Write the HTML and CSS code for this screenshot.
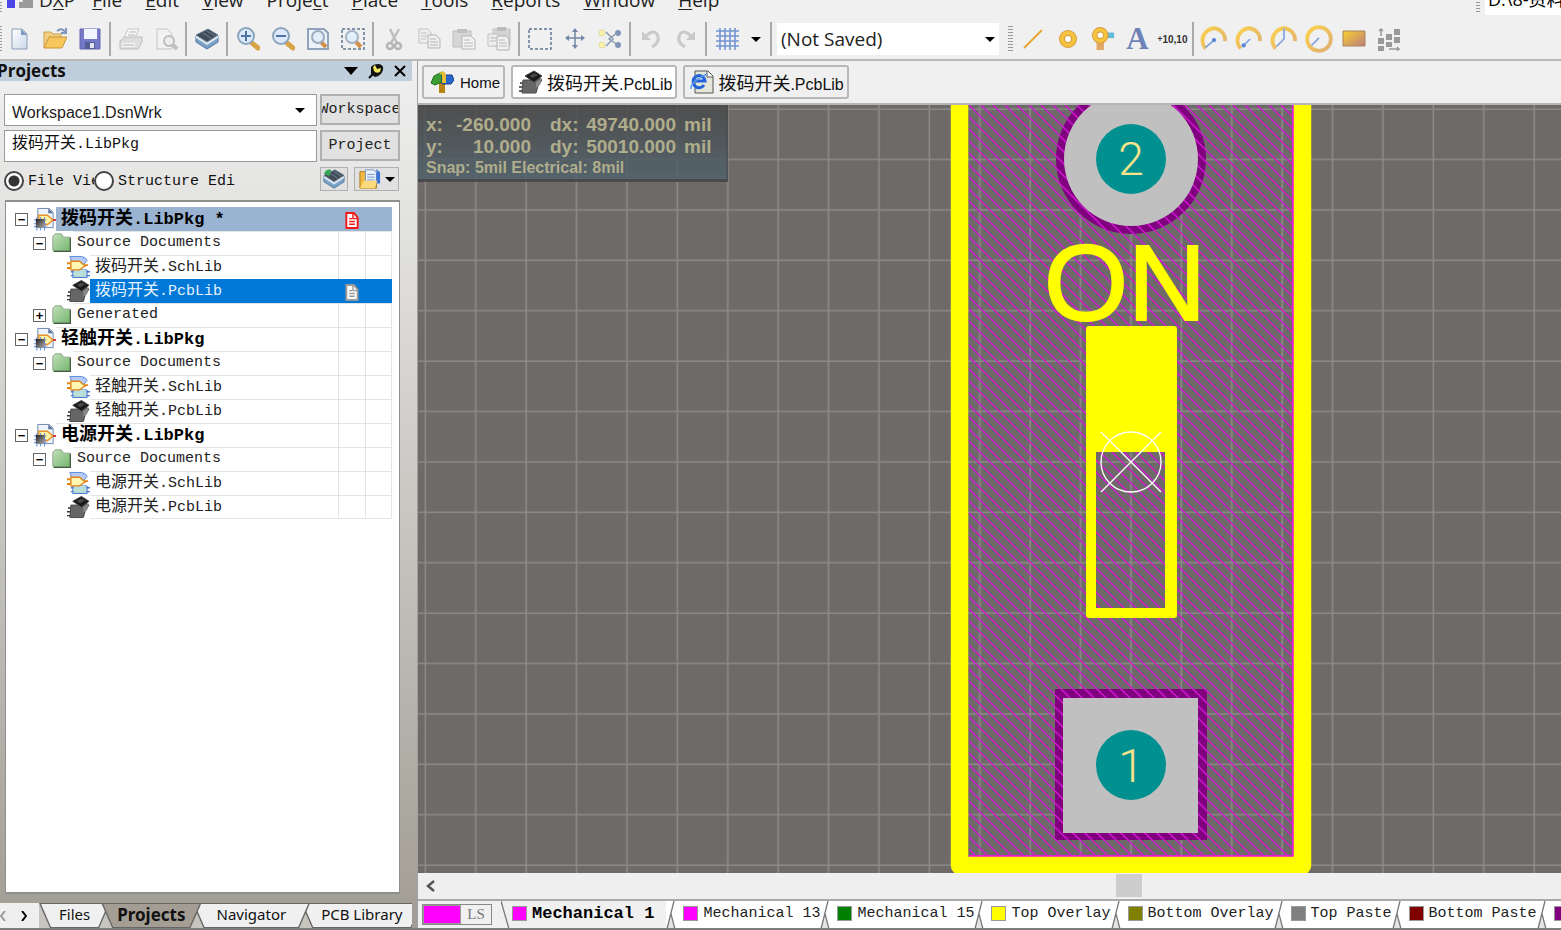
FILE: index.html
```html
<!DOCTYPE html>
<html lang="zh-CN">
<head>
    <meta charset="UTF-8">
    <meta name="viewport" content="width=device-width, initial-scale=1.0">
    <title>拨码开关.PcbLib</title>
    <link rel="stylesheet" href="styles.css">
</head>
<body>
    <!-- 图标 -->
    <svg class="defs" width="0" height="0" aria-hidden="true">
        <defs>
            <linearGradient id="g-paper" x1="0" y1="0" x2="1" y2="1"><stop offset="0" stop-color="#fff"/><stop offset="1" stop-color="#c8d8ea"/></linearGradient>
            <linearGradient id="g-gold" x1="0" y1="0" x2="1" y2="1"><stop offset="0" stop-color="#fbd14b"/><stop offset="1" stop-color="#dfae78"/></linearGradient>
            <linearGradient id="g-rect" x1="0" y1="0" x2="1" y2="1"><stop offset="0" stop-color="#fccf2c"/><stop offset="1" stop-color="#b98080"/></linearGradient>
            <linearGradient id="g-green" x1="0" y1="0" x2="1" y2="1"><stop offset="0" stop-color="#c4e0bd"/><stop offset="1" stop-color="#74b56d"/></linearGradient>
            <linearGradient id="g-chip" x1="0" y1="0" x2="1" y2="1"><stop offset="0" stop-color="#222"/><stop offset="1" stop-color="#aaa"/></linearGradient>
        </defs>
        <symbol id="i-new" viewBox="0 0 24 24"><path d="M4 2h10l5 5v15H4z" fill="url(#g-paper)" stroke="#8a9cb3"/><path d="M13 2l6 6h-6z" fill="#7a98c0"/></symbol>
        <symbol id="i-open" viewBox="0 0 24 24"><path d="M1 21V5h7l2 2h8v4" fill="#f2cf82" stroke="#c9a04f"/><path d="M1 21l5-11h18l-5 11z" fill="#f7c75c" stroke="#c9953b"/><path d="M14 4q5-4 8 1m1-4v5h-5" fill="none" stroke="#7d97bb" stroke-width="2"/></symbol>
        <symbol id="i-save" viewBox="0 0 24 24"><path d="M2 2h20v20H2z" fill="#7678c8" stroke="#6567b0"/><path d="M6 2h13v10H6z" fill="#f2f5ff"/><path d="M7 15h10v7H7z" fill="#555f91"/><path d="M12 16h4v5h-4z" fill="#e0e4f5"/></symbol>
        <symbol id="i-print" viewBox="0 0 24 24"><path d="M9 2h11l-4 9H5z" fill="#f8f8f8" stroke="#c4c4c4"/><path d="M1 14l5-4h17v5l-4 7H1z" fill="#dedede" stroke="#bcbcbc"/><path d="M3 16h13v4H3z" fill="#f4f4f4"/><path d="M4 18h11M10 5h7M9 8h7" stroke="#b5b5b5"/></symbol>
        <symbol id="i-preview" viewBox="0 0 24 24"><path d="M3 2h10l5 5v15H3z" fill="#f2f2f2" stroke="#c4c4c4"/><circle cx="15" cy="14" r="5" fill="#eee" stroke="#bdbdbd" stroke-width="2"/><path d="M19 18l4 4" stroke="#c0c0c0" stroke-width="4"/></symbol>
        <symbol id="i-layers" viewBox="0 0 24 24"><path d="M1 9v6l11 7 11-7V9z" fill="#7aa2c9" stroke="#54789b"/><path d="M1 9v2l11 7 11-7V9z" fill="#dce7f0"/><path d="M1 8l12-6 10 6-11 7z" fill="#414c58" stroke="#6e8090"/><path d="M8 6l8 5m-4-7l8 5" stroke="#718294"/></symbol>
        <symbol id="i-zoomin" viewBox="0 0 24 24"><path d="M16 16l6 5" stroke="#d6a446" stroke-width="5" stroke-linecap="round"/><circle cx="10" cy="9" r="8" fill="#dce9fa" stroke="#8ba4bd" stroke-width="2"/><path d="M5 9h10M10 4v10" stroke="#4e72a4" stroke-width="2"/></symbol>
        <symbol id="i-zoomout" viewBox="0 0 24 24"><path d="M16 16l6 5" stroke="#d6a446" stroke-width="5" stroke-linecap="round"/><circle cx="10" cy="9" r="8" fill="#dce9fa" stroke="#8ba4bd" stroke-width="2"/><path d="M5 9h10" stroke="#4e72a4" stroke-width="2"/></symbol>
        <symbol id="i-zoomdoc" viewBox="0 0 24 24"><path d="M2 2h16l4 4v16H2z" fill="#edf2f8" stroke="#8fa4bc" stroke-width="2"/><path d="M15 15l5 5" stroke="#d18f4c" stroke-width="4"/><circle cx="12" cy="10" r="6" fill="#e3eefb" stroke="#9bacc0" stroke-width="2"/></symbol>
        <symbol id="i-zoomarea" viewBox="0 0 24 24"><path d="M1 2h22v20H1z" fill="none" stroke="#5c7491" stroke-width="1.5" stroke-dasharray="3 2"/><path d="M15 15l5 5" stroke="#d18f4c" stroke-width="4"/><circle cx="11" cy="10" r="6" fill="#e3eefb" stroke="#a4b3c4" stroke-width="2"/></symbol>
        <symbol id="i-cut" viewBox="0 0 24 24"><path d="M8 2l7 14M17 2L9 16" stroke="#bdbdbd" stroke-width="2.5"/><circle cx="8" cy="19" r="3" fill="none" stroke="#b5b5b5" stroke-width="2.5"/><circle cx="16" cy="19" r="3" fill="none" stroke="#b5b5b5" stroke-width="2.5"/></symbol>
        <symbol id="i-copy" viewBox="0 0 24 24"><path d="M2 2h9l3 3v11H2z" fill="#eee" stroke="#c4c4c4"/><path d="M4 6h6M4 9h6M4 12h5" stroke="#c2c2c2"/><path d="M11 8h8l4 4v9H11z" fill="#eee" stroke="#b5b5b5"/><path d="M13 12h6M13 15h8M13 18h8" stroke="#b8b8b8"/></symbol>
        <symbol id="i-paste" viewBox="0 0 24 24"><path d="M1 4h18v16H1z" fill="#d6d6d6" stroke="#c0c0c0"/><path d="M5 2h10v4H5z" fill="#c0c0c0"/><path d="M10 9h9l4 4v9H10z" fill="#f2f2f2" stroke="#b5b5b5"/><path d="M12 13h6M12 16h9M12 19h9" stroke="#b8b8b8"/></symbol>
        <symbol id="i-pastes" viewBox="0 0 24 24"><path d="M6 2h17v17H6z" fill="#d4d4d4" stroke="#c0c0c0"/><path d="M10 0h9v4h-9z" fill="#bbb"/><path d="M1 7h10v12H1z" fill="#eee" stroke="#c0c0c0"/><path d="M10 9h9l3 3v11H10z" fill="#f0f0f0" stroke="#b0b0b0"/><path d="M3 11h6M3 14h6M12 13h6M12 16h8M12 19h8" stroke="#b8b8b8"/></symbol>
        <symbol id="i-select" viewBox="0 0 24 24"><path d="M1 2h22v20H1z" fill="none" stroke="#5c7491" stroke-width="1.5" stroke-dasharray="3 2"/></symbol>
        <symbol id="i-move" viewBox="0 0 24 24"><path d="M12 3v17M3 11h18" stroke="#7289a5" stroke-width="1.5"/><path d="M12 1l3 4H9zM12 22l3-4H9zM2 11l4-3v6zM22 11l-4-3v6z" fill="#7289a5"/></symbol>
        <symbol id="i-cross" viewBox="0 0 24 24"><circle cx="4" cy="6" r="3" fill="#fbf3a9" stroke="#e5dc98"/><circle cx="4" cy="18" r="3" fill="#fbf3a9" stroke="#e5dc98"/><circle cx="20" cy="6" r="3" fill="#8094b8"/><circle cx="20" cy="18" r="3" fill="#8094b8"/><path d="M8 5l7 7-7 7M19 6l-8 6 9 6" fill="none" stroke="#8b9bb2" stroke-width="1.5"/></symbol>
        <symbol id="i-undo" viewBox="0 0 24 24"><path d="M6 10q7-8 12-3 4 8-5 13" fill="none" stroke="#cacaca" stroke-width="3"/><path d="M3 4v9h9z" fill="#cacaca"/></symbol>
        <symbol id="i-redo" viewBox="0 0 24 24"><path d="M18 10q-7-8-12-3-4 8 5 13" fill="none" stroke="#cacaca" stroke-width="3"/><path d="M21 4v9h-9z" fill="#cacaca"/></symbol>
        <symbol id="i-grid" viewBox="0 0 24 24"><path d="M5 1v22M10 1v22M15 1v22M20 1v22M1 4h23M1 9h23M1 14h23M1 19h23" stroke="#7395d1" stroke-width="1.6"/></symbol>
        <symbol id="i-line" viewBox="0 0 24 24"><path d="M3 21L21 3" stroke="#e6a636" stroke-width="2"/></symbol>
        <symbol id="i-pad" viewBox="0 0 24 24"><circle cx="12" cy="12" r="6" fill="#fff" stroke="#d89a3c" stroke-width="6"/><circle cx="12" cy="12" r="6" fill="none" stroke="#f6c340" stroke-width="4"/></symbol>
        <symbol id="i-via" viewBox="0 0 26 26"><path d="M14 6h11v6H14z" fill="#63b9d8"/><path d="M6 14h8v11H6z" fill="#e1a768"/><circle cx="10" cy="9" r="6" fill="#fff" stroke="#d89a3c" stroke-width="6"/><circle cx="10" cy="9" r="6" fill="none" stroke="#f6c340" stroke-width="4"/></symbol>
        <symbol id="i-arc" viewBox="0 0 26 26"><path d="M5 22Q-1 13 6 6q7-6 14 0 4 4 3 9" fill="none" stroke="url(#g-gold)" stroke-width="3.5"/></symbol>
        <symbol id="i-array" viewBox="0 0 24 24"><path d="M9 7h6v6H9zM1 11h6v6H1zM1 19h6v5H1zM9 15h6v5H9zM17 2h6v6h-6zM17 10h6v6h-6z" fill="#999"/><path d="M4 9V2M2 4l2-2 2 2M12 22h10m-2-2l2 2-2 2" fill="none" stroke="#999" stroke-width="1.5"/></symbol>
        <symbol id="i-home" viewBox="0 0 24 24"><path d="M9 8h6v15H9z" fill="#b98312"/><path d="M1 13l3-7 8-4v10l-7 3z" fill="#3a9e33" stroke="#1d6b21"/><path d="M12 5h10l2 5-3 4h-9z" fill="#2a65ca" stroke="#143f8c"/><path d="M9 3l4-2 3 3v9h-4V5z" fill="#e7bd34"/></symbol>
        <symbol id="i-pcb" viewBox="0 0 24 24"><path d="M1 13h7M0 17h6M0 21h5M14 17h5M12 21h6" stroke="#333" stroke-width="1.5"/><path d="M4 10h10l6-2 3 2-4 6-2 7H3z" fill="#666" stroke="#4a4a4a"/><path d="M17 12l6-4-2 7-4 3z" fill="#888"/><path d="M6 6l9-5 8 5-8 6z" fill="#181818" stroke="#444"/><path d="M10 6l5-3 4 2-5 3z" fill="#484848"/></symbol>
        <symbol id="i-web" viewBox="0 0 24 24"><path d="M5 1h13l5 5v17H5z" fill="#e5e5da" stroke="#555"/><path d="M17 1v6h6" fill="#fff" stroke="#555"/><path d="M14 15a6 6 0 1 1 1-4H5" fill="none" stroke="#2364d8" stroke-width="3"/><path d="M1 19Q0 12 17 4" fill="none" stroke="#5a9af0" stroke-width="1.5"/></symbol>
        <symbol id="i-pkg" viewBox="0 0 24 24"><path d="M5 1h12l4 4v16H5z" fill="#eef4fc" stroke="#6c87aa"/><path d="M16 1v5h5" fill="#536f94"/><path d="M6 8h9l6 5-6 5H6z" fill="#fff2a1" stroke="#e7912d" stroke-width="1.5"/><path d="M21 13h3" stroke="#c33" stroke-width="2"/><path d="M1 13h13M1 17h13M1 20h13M4 10v14M8 10v14M12 10v14" stroke="#5684dd"/><path d="M3 12h9v9H3z" fill="url(#g-chip)"/></symbol>
        <symbol id="i-folder" viewBox="0 0 24 24"><path d="M1 21V4l3-3h7l3 4h8v16z" fill="url(#g-green)" stroke="#7a9c76"/><path d="M22 6v16H2" fill="none" stroke="#3f5b3e" stroke-width="1.5"/></symbol>
        <symbol id="i-sch" viewBox="0 0 24 24"><path d="M3 1h12q5 1 6 4l-4 5H6z" fill="#b4cbf5" stroke="#5c86dc"/><path d="M6 15h15v8H6z" fill="#b5dccf" stroke="#4a78d4"/><path d="M4 17h20M4 21h20" stroke="#4a78d4" stroke-width="1.5"/><path d="M7 15h13v7H7z" fill="#b9dfd8"/><path d="M0 8h4M0 13h4M18 10h4" stroke="#e5861c" stroke-width="2"/><path d="M4 6h9l6 5-6 4H4z" fill="#fff7b2" stroke="#e5861c" stroke-width="1.5"/></symbol>
        <symbol id="i-doc" viewBox="0 0 14 18"><path d="M1 1h8l4 5v11H1z" fill="#fff" stroke="currentColor" stroke-width="2"/><path d="M8 1v6h5M4 7h3M4 10h6M4 13h6" fill="none" stroke="currentColor" stroke-width="1.5"/></symbol>
        <symbol id="i-notch" viewBox="0 0 12 28"><path d="M0 28L4 14l5 14z" fill="#e4e4e4"/><path d="M8 0L1 28M5 13l4 15" fill="none" stroke="#777" stroke-width="1.3"/></symbol>
    </svg>

    <nav class="menubar">
        <span class="grip"></span>
        <svg class="app-icon" viewBox="0 0 26 16"><path d="M0 0h14v8H8v8H0z" fill="#4b45e8"/><path d="M14 4h12v12H12V10h4z" fill="#9a9a9a"/></svg>
        <a href="#" class="dxp">D<u>X</u>P</a>
        <a href="#"><u>F</u>ile</a>
        <a href="#"><u>E</u>dit</a>
        <a href="#"><u>V</u>iew</a>
        <a href="#">Proje<u>c</u>t</a>
        <a href="#"><u>P</u>lace</a>
        <a href="#"><u>T</u>ools</a>
        <a href="#"><u>R</u>eports</a>
        <a href="#"><u>W</u>indow</a>
        <a href="#"><u>H</u>elp</a>
        <span class="grip path-grip"></span>
        <input class="path" type="text" value="D:\8-资料" aria-label="Path">
    </nav>

    <div class="toolbar">
        <span class="grip"></span>
        <button class="tool" title="New"><svg><use href="#i-new"/></svg></button>
        <button class="tool" title="Open"><svg><use href="#i-open"/></svg></button>
        <button class="tool" title="Save"><svg><use href="#i-save"/></svg></button>
        <span class="sep"></span>
        <button class="tool" title="Print"><svg><use href="#i-print"/></svg></button>
        <button class="tool" title="Preview"><svg><use href="#i-preview"/></svg></button>
        <span class="sep"></span>
        <button class="tool" title="Devices"><svg><use href="#i-layers"/></svg></button>
        <span class="sep"></span>
        <button class="tool" title="Zoom in"><svg><use href="#i-zoomin"/></svg></button>
        <button class="tool" title="Zoom out"><svg><use href="#i-zoomout"/></svg></button>
        <button class="tool" title="Fit document"><svg><use href="#i-zoomdoc"/></svg></button>
        <button class="tool" title="Fit area"><svg><use href="#i-zoomarea"/></svg></button>
        <span class="sep"></span>
        <button class="tool" title="Cut"><svg><use href="#i-cut"/></svg></button>
        <button class="tool" title="Copy"><svg><use href="#i-copy"/></svg></button>
        <button class="tool" title="Paste"><svg><use href="#i-paste"/></svg></button>
        <button class="tool" title="Paste array"><svg><use href="#i-pastes"/></svg></button>
        <span class="sep"></span>
        <button class="tool" title="Select"><svg><use href="#i-select"/></svg></button>
        <button class="tool" title="Move"><svg><use href="#i-move"/></svg></button>
        <button class="tool" title="Deselect"><svg><use href="#i-cross"/></svg></button>
        <span class="sep"></span>
        <button class="tool" title="Undo"><svg><use href="#i-undo"/></svg></button>
        <button class="tool" title="Redo"><svg><use href="#i-redo"/></svg></button>
        <span class="sep"></span>
        <button class="tool" title="Grid"><svg><use href="#i-grid"/></svg></button>
        <button class="caret-btn" title="Grid options"><span class="caret"></span></button>
        <span class="sep"></span>
        <span class="combo view-combo">
            <select aria-label="View"><option>(Not Saved)</option></select>
        </span>
        <span class="grip place-grip"></span>
        <button class="tool" title="Line"><svg><use href="#i-line"/></svg></button>
        <button class="tool" title="Pad"><svg><use href="#i-pad"/></svg></button>
        <button class="tool" title="Via"><svg><use href="#i-via"/></svg></button>
        <button class="tool letter" title="String">A</button>
        <button class="tool coord" title="Coordinate"><sub>+</sub>10,10</button>
        <span class="sep"></span>
        <button class="tool arc" title="Arc by center"><svg viewBox="0 0 26 26"><use href="#i-arc"/><path d="M5 21l8-7" stroke="#7d9fe0" stroke-width="1.5"/><circle cx="13" cy="14" r="2" fill="#5c86d8"/></svg></button>
        <button class="tool arc" title="Arc by edge"><svg viewBox="0 0 26 26"><use href="#i-arc"/><path d="M7 20l7-7" stroke="#7d9fe0" stroke-width="1.5"/><circle cx="8" cy="19" r="2" fill="#5c86d8"/></svg></button>
        <button class="tool arc" title="Arc any angle"><svg viewBox="0 0 26 26"><use href="#i-arc"/><path d="M6 20l7-7V3" fill="none" stroke="#7d9fe0" stroke-width="1.5"/></svg></button>
        <button class="tool arc" title="Full circle"><svg viewBox="0 0 26 26"><circle cx="13" cy="13" r="11" fill="none" stroke="url(#g-gold)" stroke-width="3.5"/><path d="M6 19l7-7" stroke="#7d9fe0" stroke-width="1.5"/></svg></button>
        <button class="tool" title="Fill"><svg viewBox="0 0 24 24"><path d="M1 4h22v15H1z" fill="url(#g-rect)" stroke="#a8845c"/></svg></button>
        <button class="tool" title="Array"><svg><use href="#i-array"/></svg></button>
    </div>

    <div class="workspace">
        <!-- 左侧面板 -->
        <aside class="panel">
            <header class="panel-title">
                <h2>Projects</h2>
                <button title="Menu"><svg viewBox="0 0 14 8" width="14" height="8"><path d="M0 0h14L7 8z"/></svg></button>
                <button title="Pin"><svg viewBox="0 0 16 16" width="16" height="16"><path d="M1 15l4-4" stroke="#000" stroke-width="2"/><path d="M3 4q2-3 8-3 5 1 4 6-2 6-8 7l-4-3z" fill="#111"/><path d="M5 4l2-2 2 4 4-1-1 4q-4 2-6-1z" fill="#eee65c"/></svg></button>
                <button title="Close"><svg viewBox="0 0 12 12" width="12" height="12"><path d="M1 1l10 10M11 1L1 11" stroke="#000" stroke-width="2"/></svg></button>
            </header>

            <div class="fields">
                <span class="combo ws-combo">
                    <select aria-label="Workspace"><option>Workspace1.DsnWrk</option></select>
                </span>
                <button class="btn">Workspace</button>
                <div class="project-name"><span class="cjk">拨码开关</span>.LibPkg</div>
                <button class="btn">Project</button>
            </div>

            <div class="view-row">
                <label class="radio file-view"><input type="radio" name="view" checked>File View</label>
                <label class="radio struct-view"><input type="radio" name="view">Structure Editor</label>
                <button class="btn icon-btn" title="Compile"><svg viewBox="0 0 24 24"><use href="#i-layers"/><path d="M1 6q3-6 8-4l-2 7z" fill="#35a653"/></svg></button>
                <button class="btn icon-btn wide" title="Options"><svg viewBox="0 0 24 24"><path d="M1 22V4h6l2 3h10v15z" fill="#f0b93f" stroke="#a67615"/><path d="M7 2h9l3 3v12H7z" fill="#e8f0fc" stroke="#6d8fc5"/><path d="M9 7h8M9 10h8M9 13h8" stroke="#6d8fc5"/><path d="M19 1l4 4v12h-4z" fill="#3d73d2"/><path d="M1 22l4-8h15l-3 8z" fill="#fadb7c"/></svg><span class="caret"></span></button>
            </div>

            <ul class="tree">
                <li class="lv1 current">
                    <button class="toggle">−</button><svg class="node"><use href="#i-pkg"/></svg>
                    <span class="name"><span class="cjk">拨码开关</span>.LibPkg *</span>
                    <span class="col"><svg class="doc"><use href="#i-doc"/></svg></span><span class="col"></span>
                </li>
                <li class="lv2">
                    <button class="toggle">−</button><svg class="node"><use href="#i-folder"/></svg>
                    <span class="name">Source Documents</span><span class="col"></span><span class="col"></span>
                </li>
                <li class="lv3">
                    <svg class="node"><use href="#i-sch"/></svg>
                    <span class="name"><span class="cjk">拨码开关</span>.SchLib</span><span class="col"></span><span class="col"></span>
                </li>
                <li class="lv3 selected">
                    <svg class="node"><use href="#i-pcb"/></svg>
                    <span class="name"><span class="cjk">拨码开关</span>.PcbLib</span>
                    <span class="col"><svg class="doc"><use href="#i-doc"/></svg></span><span class="col"></span>
                </li>
                <li class="lv2">
                    <button class="toggle">+</button><svg class="node"><use href="#i-folder"/></svg>
                    <span class="name">Generated</span><span class="col"></span><span class="col"></span>
                </li>
                <li class="lv1">
                    <button class="toggle">−</button><svg class="node"><use href="#i-pkg"/></svg>
                    <span class="name"><span class="cjk">轻触开关</span>.LibPkg</span><span class="col"></span><span class="col"></span>
                </li>
                <li class="lv2">
                    <button class="toggle">−</button><svg class="node"><use href="#i-folder"/></svg>
                    <span class="name">Source Documents</span><span class="col"></span><span class="col"></span>
                </li>
                <li class="lv3">
                    <svg class="node"><use href="#i-sch"/></svg>
                    <span class="name"><span class="cjk">轻触开关</span>.SchLib</span><span class="col"></span><span class="col"></span>
                </li>
                <li class="lv3">
                    <svg class="node"><use href="#i-pcb"/></svg>
                    <span class="name"><span class="cjk">轻触开关</span>.PcbLib</span><span class="col"></span><span class="col"></span>
                </li>
                <li class="lv1">
                    <button class="toggle">−</button><svg class="node"><use href="#i-pkg"/></svg>
                    <span class="name"><span class="cjk">电源开关</span>.LibPkg</span><span class="col"></span><span class="col"></span>
                </li>
                <li class="lv2">
                    <button class="toggle">−</button><svg class="node"><use href="#i-folder"/></svg>
                    <span class="name">Source Documents</span><span class="col"></span><span class="col"></span>
                </li>
                <li class="lv3">
                    <svg class="node"><use href="#i-sch"/></svg>
                    <span class="name"><span class="cjk">电源开关</span>.SchLib</span><span class="col"></span><span class="col"></span>
                </li>
                <li class="lv3 last">
                    <svg class="node"><use href="#i-pcb"/></svg>
                    <span class="name"><span class="cjk">电源开关</span>.PcbLib</span><span class="col"></span><span class="col"></span>
                </li>
            </ul>

            <div class="panel-tabs">
                <div class="arrows">
                    <button title="Previous"><svg viewBox="0 0 6 10" width="6" height="10"><path d="M5 0L1 5l4 5" fill="none" stroke="#999" stroke-width="2"/></svg></button>
                    <button title="Next"><svg viewBox="0 0 6 10" width="6" height="10"><path d="M1 0l4 5-4 5" fill="none" stroke="#000" stroke-width="2"/></svg></button>
                </div>
                <button class="ptab files"><span>Files</span></button>
                <button class="ptab active"><span>Projects</span></button>
                <button class="ptab nav"><span>Navigator</span></button>
                <button class="ptab lib"><span>PCB Library</span></button>
            </div>
        </aside>

        <!-- 编辑区 -->
        <main class="editor">
            <div class="doc-tabs">
                <button class="dtab home"><svg><use href="#i-home"/></svg>Home</button>
                <button class="dtab active"><svg><use href="#i-pcb"/></svg><span><span class="cjk">拨码开关</span>.PcbLib</span></button>
                <button class="dtab"><svg><use href="#i-web"/></svg><span><span class="cjk">拨码开关</span>.PcbLib</span></button>
            </div>

            <div class="canvas">
                <!-- 坐标原点在元件参考点 -->
                <svg class="board" viewBox="-713 -357 1143 768" preserveAspectRatio="xMidYMid slice">
                    <defs>
                        <pattern id="grid" x="-25" y="-25" width="50.4" height="50.4" patternUnits="userSpaceOnUse">
                            <path d="M25 0V51M0 25H51" stroke="#8c8989" stroke-width="1.6"/>
                        </pattern>
                        <pattern id="hatch" width="12" height="12" patternUnits="userSpaceOnUse">
                            <path d="M-1 8l5 5M2 -1l11 11" stroke="#cf18cf" stroke-width="1.5"/>
                        </pattern>
                    </defs>
                    <rect x="-1500" y="-1500" width="3000" height="3000" fill="#6e6a69"/>
                    <rect x="-1500" y="-1500" width="3000" height="3000" fill="url(#grid)"/>
                    <circle cx="0" cy="-303" r="75" fill="#800080"/>
                    <rect x="-76" y="227" width="152" height="151" fill="#800080"/>
                    <rect x="-162" y="-480" width="324" height="875" fill="url(#hatch)"/>
                    <path d="M162 -480V394H-162" fill="none" stroke="#e619d6" stroke-width="2"/>
                    <circle cx="0" cy="-303" r="67" fill="#c0c0c0"/>
                    <rect x="-68" y="236" width="135" height="135" fill="#c0c0c0"/>
                    <circle cx="0" cy="-303" r="35" fill="#009090"/>
                    <circle cx="0" cy="303" r="35" fill="#009090"/>
                    <text class="pin" x="0" y="-287">2</text>
                    <text class="pin" x="0" y="320">1</text>
                    <rect x="-171.5" y="-480" width="343" height="883.5" fill="none" stroke="#ff0" stroke-width="17.5" stroke-linejoin="round"/>
                    <text class="silk" x="-87" y="-142">ON</text>
                    <path d="M-42 -136H43q3 0 3 3V153q0 3-3 3H-42q-3 0-3-3V-133q0-3 3-3zM-35 -10V146H34V-10z" fill="#ff0" fill-rule="evenodd"/>
                    <path d="M-30 -30L30 30M30 -30L-30 30" stroke="#fff" stroke-width="1.3"/>
                    <circle cx="0" cy="0" r="30" fill="none" stroke="#fff" stroke-width="1.3"/>
                </svg>
                <div class="hud">
                    <div class="hud-grid">
                        <span>x:</span><span class="num">-260.000</span><span>dx:</span><span class="num">49740.000</span><span>mil</span>
                        <span>y:</span><span class="num">10.000</span><span>dy:</span><span class="num">50010.000</span><span>mil</span>
                    </div>
                    <p>Snap: 5mil Electrical: 8mil</p>
                </div>
            </div>

            <div class="scrollbar">
                <button title="Scroll left"><svg viewBox="0 0 9 12" width="9" height="12"><path d="M8 1L2 6l6 5" fill="none" stroke="#555" stroke-width="2.5"/></svg></button>
                <div class="track"><div class="thumb"></div></div>
            </div>

            <div class="layers">
                <button class="layer-set"><i class="magenta"></i><span>LS</span></button>
                <svg class="lead" viewBox="0 0 9 28"><path d="M0 0l8 28" stroke="#777" stroke-width="1.3"/></svg>
                <button class="layer active"><i class="magenta"></i>Mechanical 1</button>
                <button class="layer"><svg><use href="#i-notch"/></svg><i class="magenta"></i>Mechanical 13</button>
                <button class="layer"><svg><use href="#i-notch"/></svg><i class="green"></i>Mechanical 15</button>
                <button class="layer"><svg><use href="#i-notch"/></svg><i class="yellow"></i>Top Overlay</button>
                <button class="layer"><svg><use href="#i-notch"/></svg><i class="olive"></i>Bottom Overlay</button>
                <button class="layer"><svg><use href="#i-notch"/></svg><i class="gray"></i>Top Paste</button>
                <button class="layer"><svg><use href="#i-notch"/></svg><i class="maroon"></i>Bottom Paste</button>
                <button class="layer" title="Top Solder"><svg><use href="#i-notch"/></svg><i class="purple"></i></button>
            </div>
        </main>
    </div>
</body>
</html>
```
FILE: styles.css
```css
* {
    box-sizing: border-box;
}

body {
    margin: 0;
    height: 100vh;
    display: flex;
    flex-direction: column;
    overflow: hidden;
    background: #f0f0f0;
    color: #111;
    font-family: "Liberation Sans", "Noto Sans CJK SC", sans-serif;
    font-size: 16px;
}

button {
    margin: 0;
    padding: 0;
    border: 0;
    background: none;
    color: inherit;
    font: inherit;
    white-space: nowrap;
}

svg {
    display: block;
    flex: none;
}

.defs {
    position: absolute;
}

.caret {
    border: 5px solid transparent;
    border-top-color: #000;
    border-bottom: 0;
}

.grip {
    flex: none;
    width: 4px;
    height: 26px;
    background: repeating-linear-gradient(#999 0 1px, transparent 1px 3px);
}

/* 菜单 */
.menubar {
    flex: none;
    display: flex;
    align-items: center;
    height: 32px;
    margin-top: -10px;
    padding-bottom: 12px;
    font-family: "Open Sans", "Noto Sans", sans-serif;
    font-size: 19px;
}

.menubar > .grip {
    width: 2px;
}

.app-icon {
    width: 26px;
    height: 16px;
    margin: 0 6px 0 5px;
}

.menubar a {
    margin-right: 23px;
    color: #222;
    line-height: 22px;
    text-decoration: none;
}

.menubar .dxp {
    margin-right: 17px;
}

.menubar u {
    text-underline-offset: 2px;
}

.menubar > .path-grip {
    width: 4px;
    margin-left: auto;
}

.path {
    width: 76px;
    height: 30px;
    margin-left: 5px;
    padding: 0 0 4px 3px;
    border: 0;
    background: #fff;
    font: 18px "Open Sans", "Noto Sans CJK SC", sans-serif;
}

/* 工具栏 */
.toolbar {
    flex: none;
    display: flex;
    align-items: center;
    height: 39px;
    padding-bottom: 3px;
    border-bottom: 2px solid #b9b9b9;
    background: #f0f0f0;
}

.toolbar > .grip {
    width: 2px;
}

.tool {
    flex: none;
    width: 35px;
    height: 34px;
    display: flex;
    align-items: center;
    justify-content: center;
}

.tool svg {
    width: 24px;
    height: 24px;
}

.arc svg {
    width: 28px;
    height: 28px;
}

.sep {
    flex: none;
    width: 2px;
    height: 34px;
    margin: 0 2px;
    background: #a9a9a9;
}

.caret-btn {
    width: 24px;
    height: 34px;
    display: flex;
    align-items: center;
    justify-content: center;
}

.combo {
    position: relative;
    display: block;
    background: #fff;
}

.combo select {
    appearance: none;
    width: 100%;
    height: 100%;
    border: 0;
    background: none;
    color: #222;
    font: inherit;
}

.combo::after {
    content: '';
    position: absolute;
    right: 4px;
    top: 50%;
    margin-top: -2px;
    border: 5px solid transparent;
    border-top-color: #000;
    border-bottom: 0;
    pointer-events: none;
}

.view-combo {
    flex: none;
    width: 222px;
    height: 32px;
    margin-left: 3px;
    font: 19px "Open Sans", "Noto Sans", sans-serif;
}

.view-combo select {
    padding: 0 4px;
}

.toolbar > .place-grip {
    width: 5px;
    margin: 0 2px 0 9px;
}

.letter {
    color: #6c82b8;
    font: bold 31px "Liberation Serif", serif;
}

.coord {
    color: #333;
    font: bold 10px "Liberation Sans", sans-serif;
}

/* 主体 */
.workspace {
    flex: 1;
    display: flex;
    min-height: 0;
    border-bottom: 2px solid #7d7d7d;
}

.panel {
    flex: none;
    width: 418px;
    display: flex;
    flex-direction: column;
    padding-right: 5px;
    border-right: 1px solid #a0a0a0;
    background: linear-gradient(#f0f0f0, #dcdbd8 28%, #a19d94);
    font-family: "Liberation Mono", "Noto Sans CJK SC", monospace;
    font-size: 15px;
}

.cjk {
    font-size: 16px;
}

.panel-title {
    display: flex;
    align-items: center;
    gap: 10px;
    height: 20px;
    padding-right: 6px;
    background: #c0cddb;
}

.panel-title h2 {
    flex: 1;
    margin: 0 0 0 -3px;
    font: bold 17px/20px "Open Sans", "Noto Sans", sans-serif;
}

.fields {
    display: grid;
    grid-template-columns: 313px 80px;
    gap: 4px 3px;
    padding: 13px 0 0 4px;
    align-items: start;
}

.ws-combo,
.project-name {
    height: 32px;
    border: 1px solid #9b9b9b;
    background: #fff;
    line-height: 26px;
    padding-left: 7px;
    white-space: nowrap;
}

.ws-combo {
    padding: 4px 0 0;
    font: 16px "Liberation Sans", sans-serif;
}

.ws-combo select {
    padding: 0 7px;
}

.ws-combo::after {
    right: 11px;
}

.btn {
    height: 31px;
    overflow: hidden;
    border: 2px solid #b0b0b0;
    background: #e1e1e1;
    color: #222;
    display: flex;
    align-items: center;
    justify-content: center;
}

.view-row {
    display: flex;
    align-items: center;
    height: 38px;
    padding: 0 13px 0 4px;
}

.radio {
    display: flex;
    align-items: center;
    overflow: hidden;
    white-space: nowrap;
}

.radio input {
    appearance: none;
    flex: none;
    width: 20px;
    height: 20px;
    margin: 0 4px 0 0;
    border: 2px solid #444;
    border-radius: 50%;
    background: #fff;
}

.radio input:checked {
    background: radial-gradient(#333 5px, #fff 6px);
}

.file-view {
    width: 90px;
}

.struct-view {
    width: 141px;
}

.icon-btn {
    width: 28px;
    height: 24px;
    border-width: 1px;
    margin: 0 0 4px auto;
}

.icon-btn svg {
    width: 22px;
    height: 22px;
}

.icon-btn.wide {
    width: 45px;
    gap: 4px;
    margin-left: 6px;
}

/* 项目树 */
.tree {
    flex: 1;
    width: 395px;
    margin: 0 0 0 5px;
    padding: 5px 7px 0 8px;
    list-style: none;
    border: 2px solid #8f8f8f;
    border-left-width: 1px;
    border-right-width: 1px;
    background: #fff;
}

.tree li {
    display: flex;
    align-items: center;
    height: 24px;
}

.tree .lv2 {
    padding-left: 18px;
}

.tree .lv3 {
    padding-left: 53px;
}

.toggle {
    flex: none;
    width: 13px;
    height: 13px;
    margin: 1px 5px 0 1px;
    border: 1px solid #666;
    background: #fff;
    color: #000;
    font: bold 13px/10px "Liberation Sans", sans-serif;
}

.node {
    width: 23px;
    height: 24px;
}

.lv2 .node {
    width: 22px;
    height: 20px;
}

.name {
    flex: 1;
    height: 24px;
    padding-left: 5px;
    border-top: 1px solid #e4e4e4;
    line-height: 22px;
    color: #222;
}

.lv2 .name {
    padding-left: 4px;
}

.col {
    width: 27px;
    height: 24px;
    padding: 4px 0 0 6px;
    border-top: 1px solid #e4e4e4;
    border-left: 1px solid #e4e4e4;
}

.col:last-child {
    border-right: 1px solid #e4e4e4;
}

.last .name,
.last .col {
    border-bottom: 1px solid #e4e4e4;
}

.doc {
    width: 14px;
    height: 17px;
    color: #f01818;
}

.lv1 .name {
    color: #000;
    font-size: 17px;
    font-weight: bold;
}

.lv1 .cjk {
    font-size: 18px;
}

.current .name,
.current .col,
.current .col:last-child {
    border-color: #9ab3d1;
    background: #9ab3d1;
}

.selected .name,
.selected .col,
.selected .col:last-child {
    border-color: #0078d7;
    background: #0078d7;
    color: #e6f2ff;
}

.selected .doc {
    color: #999;
}

/* 面板标签 */
.panel-tabs {
    display: flex;
    height: 25px;
    margin-top: 9px;
    overflow: hidden;
    background: #c8c5bf;
    font: 15px "Noto Sans", sans-serif;
}

.arrows {
    flex: none;
    display: flex;
    align-items: center;
    gap: 15px;
    width: 39px;
    background: #efefef;
}

.ptab {
    position: relative;
    flex: none;
    margin-right: -9px;
    background: #666;
    clip-path: polygon(0 0, 100% 0, calc(100% - 11px) 100%, 11px 100%);
}

.ptab span {
    display: block;
    height: 23px;
    margin: 1px 0;
    padding: 0 20px;
    line-height: 21px;
    background: #f0f0f0;
    clip-path: polygon(2px 0, calc(100% - 2px) 0, calc(100% - 12px) 100%, 12px 100%);
}

.files {
    z-index: 3;
}

.nav {
    z-index: 2;
}

.nav span {
    padding: 0 24px;
}

.lib {
    z-index: 1;
}

.ptab.active {
    z-index: 4;
    font-size: 17px;
    font-weight: bold;
}

.ptab.active span {
    padding: 0 16px;
    background: #a39d94;
}

/* 编辑区 */
.editor {
    flex: 1;
    min-width: 0;
    display: flex;
    flex-direction: column;
}

.doc-tabs {
    display: flex;
    gap: 6px;
    height: 44px;
    padding: 4px 4px 0;
    border-bottom: 2px solid #b5b5b5;
}

.dtab {
    display: flex;
    align-items: center;
    gap: 4px;
    height: 34px;
    padding: 0 3px 1px 5px;
    border: 2px solid #b8b8b8;
    border-radius: 3px;
}

.dtab svg {
    width: 24px;
    height: 24px;
}

.dtab.home {
    padding: 0 3px 0 6px;
    gap: 6px;
    font-size: 15px;
}

.dtab.active {
    padding-left: 6px;
    background: #fff;
}

.dtab .cjk {
    font-size: 18px;
}

.canvas {
    flex: 1;
    position: relative;
    min-height: 0;
    background: #6e6a69;
}

.board {
    width: 100%;
    height: 100%;
}

.pin {
    fill: #f7e38c;
    font-family: Roboto, sans-serif;
    font-size: 46px;
    font-weight: 300;
    text-anchor: middle;
}

.silk {
    fill: #ff0;
    stroke: #ff0;
    stroke-width: 2px;
    font-family: "Liberation Sans", sans-serif;
    font-size: 108px;
}

.hud {
    position: absolute;
    left: 0;
    top: 0;
    width: 310px;
    height: 77px;
    padding: 9px 0 0 8px;
    border: solid rgba(70, 70, 70, 0.5);
    border-width: 0 2px 3px 0;
    background: linear-gradient(rgba(70, 70, 70, 0.8), rgba(80, 98, 108, 0.85));
    color: #b0ad8c;
    font-weight: bold;
}

.hud-grid {
    display: grid;
    grid-template-columns: 24px 81px 55px 90px 40px;
    font-size: 19px;
    line-height: 22px;
}

.hud-grid .num {
    text-align: right;
}

.hud-grid span:nth-child(5n + 3) {
    padding-left: 19px;
}

.hud-grid span:nth-child(5n) {
    padding-left: 8px;
}

.hud p {
    margin: 0;
    font-size: 16px;
    line-height: 20px;
}

.scrollbar {
    flex: none;
    display: flex;
    align-items: center;
    height: 26px;
    padding: 1px 0 2px 8px;
    background: #efefef;
}

.track {
    flex: 1;
    height: 100%;
    padding-left: 60%;
}

.thumb {
    width: 26px;
    height: 100%;
    background: #cdcdcd;
}

/* 层标签 */
.layers {
    flex: none;
    display: flex;
    height: 29px;
    overflow: hidden;
    border-top: 2px solid #aaa;
    background: #f0f0f0;
    font: 15px "Liberation Mono", monospace;
}

.layer-set {
    flex: none;
    display: flex;
    align-items: center;
    width: 70px;
    height: 21px;
    margin: 3px 9px 0 4px;
    border: 1px solid #888;
    color: #777;
    font-family: "Liberation Serif", serif;
}

.layer-set span {
    flex: 1;
    text-align: center;
}

.layers i {
    flex: none;
    width: 15px;
    height: 15px;
    border: 1px solid #999;
}

.layers .layer-set i {
    width: 38px;
    height: 19px;
}

.lead {
    width: 9px;
    height: 28px;
}

.layer {
    flex: none;
    display: flex;
    align-items: center;
    gap: 5px;
    padding-bottom: 3px;
    background: #fff;
    color: #222;
}

.layer > svg {
    width: 12px;
    height: 28px;
    margin-right: -1px;
    align-self: flex-start;
}

.layer > svg + i {
    margin-left: 1px;
}

.layer.active {
    padding-left: 2px;
    padding-right: 12px;
    background: #f0f0f0;
    color: #000;
    font-size: 17px;
    font-weight: bold;
}

.magenta { background: #f0f; }
.green { background: #008000; }
.yellow { background: #ff0; }
.olive { background: #808000; }
.gray { background: #808080; }
.maroon { background: #800000; }
.purple { background: #800080; }
```
